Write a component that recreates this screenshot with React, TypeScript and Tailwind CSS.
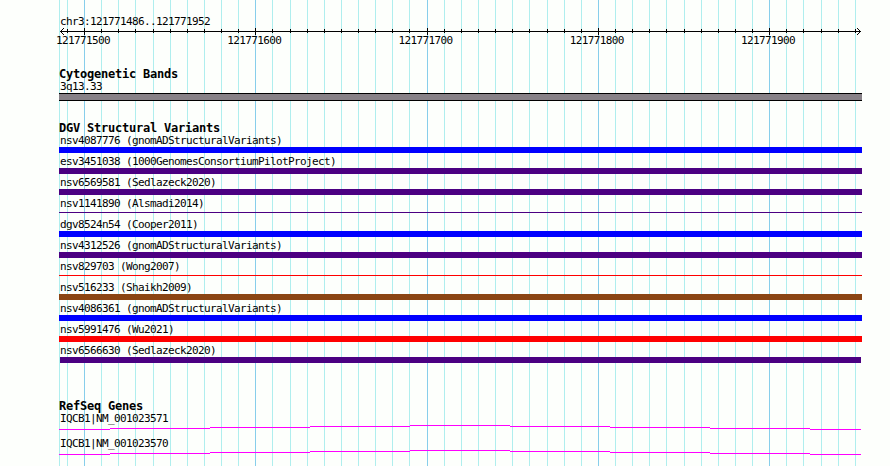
const FONT = "font-['DejaVu_Sans_Mono','Liberation_Mono',monospace]";

const AXIS_START = 59;
const minorLines = [
  59, 67, 101, 118, 135, 153, 170, 187, 204, 221, 238, 272, 290, 307, 324, 341, 358, 375, 392, 409, 444, 461, 478, 495,
  512, 529, 547, 564, 581, 615, 632, 649, 666, 684, 701, 718, 735, 752, 786, 803, 821, 838, 855,
];
const majorLines = [84, 255, 427, 598, 769];
const axisLabels = ["121771500", "121771600", "121771700", "121771800", "121771900"];

const variants = [
  { name: "nsv4087776 (gnomADStructuralVariants)", bar: "h-[6px] bg-[#0000ff]" },
  { name: "esv3451038 (1000GenomesConsortiumPilotProject)", bar: "h-[6px] bg-[#4b0082]" },
  { name: "nsv6569581 (Sedlazeck2020)", bar: "h-[6px] bg-[#4b0082]" },
  { name: "nsv1141890 (Alsmadi2014)", bar: "mt-[2px] h-px bg-[#4b0082]" },
  { name: "dgv8524n54 (Cooper2011)", bar: "h-[6px] bg-[#0000ff]" },
  { name: "nsv4312526 (gnomADStructuralVariants)", bar: "h-[6px] bg-[#4b0082]" },
  { name: "nsv829703 (Wong2007)", bar: "mt-[2px] h-px bg-[#ff0000]" },
  { name: "nsv516233 (Shaikh2009)", bar: "h-[6px] bg-[#8b4513]" },
  { name: "nsv4086361 (gnomADStructuralVariants)", bar: "h-[6px] bg-[#0000ff]" },
  { name: "nsv5991476 (Wu2021)", bar: "h-[6px] bg-[#ff0000]" },
  { name: "nsv6566630 (Sedlazeck2020)", bar: "ml-px mr-px h-[6px] bg-[#4b0082]" },
];

const genes = ["IQCB1|NM_001023571", "IQCB1|NM_001023570"];

function GridLines() {
  return (
    <svg className="absolute inset-0" width="890" height="466" shapeRendering="crispEdges" aria-hidden="true">
      {minorLines.map((x) => (
        <rect key={x} x={x} y="0" width="1" height="466" fill="#afeeee" />
      ))}
      {majorLines.map((x) => (
        <rect key={x} x={x} y="0" width="1" height="466" fill="#87ceeb" />
      ))}
    </svg>
  );
}

function Axis() {
  return (
    <svg className="block h-[7px] w-[803px]" viewBox="0 0 803 7" shapeRendering="crispEdges" aria-hidden="true">
      <rect x="1" y="3" width="801" height="1" />
      {minorLines.slice(1).map((x) => (
        <rect key={x} x={x - AXIS_START} y="1" width="1" height="4" />
      ))}
      {majorLines.map((x) => (
        <rect key={x} x={x - AXIS_START} y="0" width="1" height="7" />
      ))}
      {[1, 2, 3].map((d) => (
        <g key={d}>
          <rect x={1 + d} y={3 - d} width="1" height="1" />
          <rect x={1 + d} y={3 + d} width="1" height="1" />
          <rect x={801 - d} y={3 - d} width="1" height="1" />
          <rect x={801 - d} y={3 + d} width="1" height="1" />
        </g>
      ))}
    </svg>
  );
}

function Title({ children }: { children: string }) {
  return (
    <h2 className="mb-[-1px] h-[14px] whitespace-pre text-[12px] font-bold leading-[14px] tracking-[-0.224px]">
      {children}
    </h2>
  );
}

function Label({ children }: { children: string }) {
  return <div className="h-[13px] whitespace-pre pl-px leading-[13px]">{children}</div>;
}

function Transcript() {
  return (
    <svg className="block h-[5px] w-[803px]" viewBox="0 0 803 5" shapeRendering="crispEdges" aria-hidden="true">
      <path
        d="M0 4h51v1H0zM51 3h100v1H51zM151 2h100v1H151zM251 1h100v1H251zM351 0h100v1H351zM451 1h100v1H451zM551 2h100v1H551zM651 3h100v1H651zM751 4h51v1H751z"
        fill="#ff00ff"
      />
    </svg>
  );
}

export default function App() {
  return (
    <div
      className={`relative h-[466px] w-[890px] overflow-hidden bg-[#fdfffc] text-[11px] tracking-[-0.622px] text-black ${FONT}`}
    >
      <GridLines />
      <main className="relative ml-[59px] flex w-[803px] flex-col">
        <header className="pt-[15px]">
          <Label>chr3:121771486..121771952</Label>
          <Axis />
          <div className="-ml-[3px] flex h-[13px] gap-[117.25px] leading-[11px]">
            {axisLabels.map((l) => (
              <span key={l} className="w-[54px] shrink-0 whitespace-pre">
                {l}
              </span>
            ))}
          </div>
        </header>

        <section className="mt-[19px]">
          <Title>Cytogenetic Bands</Title>
          <Label>3q13.33</Label>
          <div className="h-[8px] border-y border-black bg-[#878187]" />
        </section>

        <section className="mt-[20px]">
          <Title>DGV Structural Variants</Title>
          {variants.map((v) => (
            <div key={v.name} className="flow-root h-[21px]">
              <Label>{v.name}</Label>
              <div className={v.bar} />
            </div>
          ))}
        </section>

        <section className="mt-[34px]">
          <Title>RefSeq Genes</Title>
          {genes.map((g) => (
            <div key={g} className="h-[25px]">
              <Label>{g}</Label>
              <Transcript />
            </div>
          ))}
        </section>
      </main>
    </div>
  );
}
